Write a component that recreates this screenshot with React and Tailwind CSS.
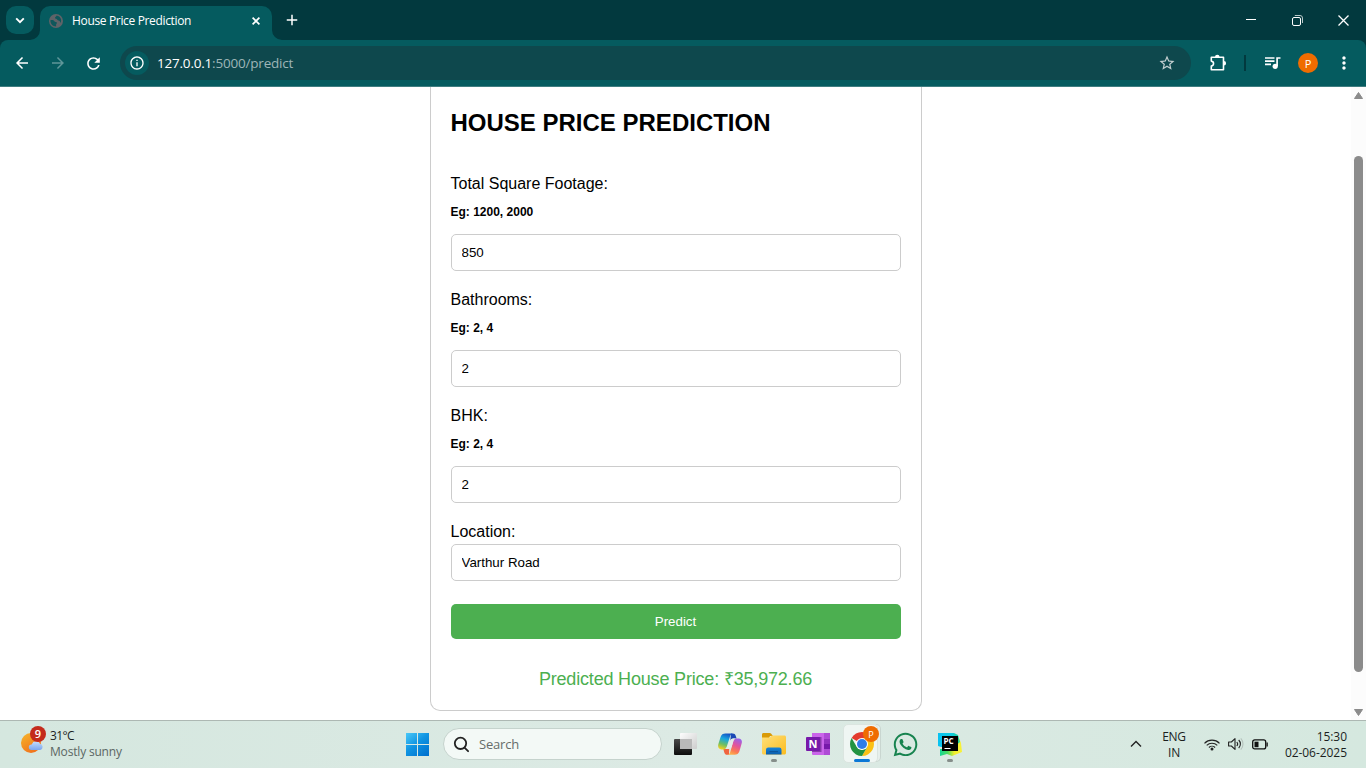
import React from "react";
import {
  MdArrowBack, MdArrowForward, MdRefresh, MdInfoOutline, MdStarBorder,
  MdMoreVert, MdAdd,
} from "react-icons/md";
import { FaWhatsapp } from "react-icons/fa";

const UI = "font-['Open_Sans','Noto_Sans',sans-serif]";

function GlobeIcon() {
  return (
    <svg width="14" height="14" viewBox="0 0 14 14">
      <circle cx="7" cy="7" r="7" fill="#5f6368" />
      <path d="M1.4 6.300c1.800-.5 3.400-.1 4 .9.500.9 2 .6 2.500 1.400.5.900-.7 1.300-.8 2.100v1.900C3.800 12.400 1.300 9.800 1.400 6.300Z" fill="#0f575b" />
      <path d="M7.600 1.500C7.400 2.800 6 2.700 6 3.800c0 1.200 1.800.8 2.300 1.900.4 1 1.900.7 2.500 1.500.4.500.3 1.200.5 1.700C13.400 6.400 11.600 2.200 7.600 1.500Z" fill="#0f575b" />
    </svg>
  );
}

function TabStrip() {
  return (
    <div className="flex h-10 items-start bg-[#02393e] pl-1.5 pt-1.5">
      <button className="flex size-7 items-center justify-center rounded-[10px] bg-[#055b5f] text-white">
        <svg width="10" height="7" fill="none" stroke="white" strokeWidth="1.900"><path d="m1.200 1.300 3.800 3.800 3.800-3.800" /></svg>
      </button>
      <div className="relative ml-1.5 flex h-[34px] w-[232px] items-center rounded-t-[10px] bg-[#055b5f] pb-[5px] pl-[9px] pr-2">
        <svg className="absolute -left-2.5 bottom-0" width="10" height="10"><path d="M10 0v10H0A10 10 0 0 0 10 0Z" fill="#055b5f" /></svg>
        <svg className="absolute -right-2.5 bottom-0" width="10" height="10"><path d="M0 0v10h10A10 10 0 0 1 0 0Z" fill="#055b5f" /></svg>
        <GlobeIcon />
        <span className="ml-[9px] flex-1 whitespace-nowrap text-[12px] leading-4 tracking-[-0.34px] text-white">House Price Prediction</span>
        <svg width="8" height="8" className="mr-1" stroke="white" strokeWidth="1.700"><path d="m.6.600 6.800 6.800M7.400.6.600 7.400" /></svg>
      </div>
      <MdAdd size={18} className="ml-[11px] mt-[5px] text-white" />
      <div className="ml-auto flex h-7 items-center text-white">
        <span className="flex w-[46px] justify-center"><svg width="10" height="10"><path d="M0 4.500h10" stroke="white" /></svg></span>
        <span className="flex w-[46px] justify-center">
          <svg width="11" height="11" fill="none" stroke="white"><rect x=".5" y="2.500" width="8" height="8" rx="1.500" /><path d="M2.800.5H8A2.500 2.500 0 0 1 10.500 3v5" stroke="#b9c9ca" /></svg>
        </span>
        <span className="flex w-[46px] justify-center"><svg width="11" height="11"><path d="M.5.5l10 10M10.500.5l-10 10" stroke="white" strokeWidth="1.300" /></svg></span>
      </div>
    </div>
  );
}

function Toolbar() {
  return (
    <div className="bg-[#02393e]">
      <div className="flex h-[47px] items-center rounded-t-[8px] border-b border-[#3f7d80] bg-[#055b5f] pl-[13px] pr-[12px] text-white">
        <MdArrowBack size={18} />
        <MdArrowForward size={18} className="ml-[18px] text-[#5f9699]" />
        <MdRefresh size={19} className="ml-[17px]" />
        <div className="ml-[17px] flex h-[34px] w-[1072px] items-center rounded-full bg-[#0e484d] pl-[5px] pr-[15px]">
          <span className="flex size-6 items-center justify-center rounded-full bg-[#055b5f]"><MdInfoOutline size={16} /></span>
          <span className="ml-2 flex-1 text-[13.5px] leading-5 tracking-[-0.2px] text-[#9db5b7]">
            <span className="text-white">127.0.0.1</span>:5000/predict
          </span>
          <MdStarBorder size={18} className="text-[#c3cfd0]" />
        </div>
        <svg className="ml-[18px]" width="18" height="18" viewBox="0 0 18 18" fill="none" stroke="white" strokeWidth="1.600" strokeLinejoin="round">
          <path d="M2.300 3.300h12.200v12.400H2.300v-3.600c3-.5 3-4.500 0-5Z" />
          <path d="M6 3a2.300 2.300 0 0 1 4.600 0ZM14.800 7a2.300 2.300 0 0 1 0 4.600Z" fill="white" stroke="none" />
        </svg>
        <span className="ml-[17px] h-4 w-0.5 bg-[#02393e]" />
        <svg className="ml-[18px]" width="18" height="18" viewBox="0 0 18 18" stroke="white" strokeWidth="1.700" fill="none">
          <path d="M1 4h9.500M1 7.200h9.500M1 10.400h6M13.100 12V4h3.400" />
          <circle cx="11.200" cy="12.300" r="2.600" fill="white" stroke="none" />
        </svg>
        <span className="ml-[16px] flex size-5 items-center justify-center rounded-full bg-[#ef6c00] text-[11px] leading-none">P</span>
        <MdMoreVert size={20} className="ml-[16px]" />
      </div>
    </div>
  );
}

function Field({ label, hint, value }) {
  return (
    <div className="mb-5 h-24">
      <label className="block text-[16px] leading-[18px]">{label}</label>
      <h5 className="mb-[15px] mt-[12px] text-[12px] font-bold leading-[14px]">{hint}</h5>
      <input className="block h-[37px] w-full rounded-[5px] border border-[#ccc] px-2.5 text-[13.333px] outline-none" defaultValue={value} />
    </div>
  );
}

function PredictionForm() {
  return (
    <form className="flex h-[624px] w-[492px] flex-col rounded-b-[10px] border border-t-0 border-[#ccc] px-5 pt-[22px]">
      <h2 className="mb-[39px] whitespace-nowrap text-[24px] font-bold leading-[27px]">HOUSE PRICE PREDICTION</h2>
      <Field label="Total Square Footage:" hint="Eg: 1200, 2000" value="850" />
      <Field label="Bathrooms:" hint="Eg: 2, 4" value="2" />
      <Field label="BHK:" hint="Eg: 2, 4" value="2" />
      <label className="mb-[3px] block text-[16px] leading-[18px]">Location:</label>
      <select className="block h-[37px] w-full shrink-0 appearance-none rounded-[5px] border border-[#ccc] bg-white px-2.5 text-[13.333px]">
        <option>Varthur Road</option>
      </select>
      <button type="button" className="mt-[23px] h-[35px] w-full shrink-0 rounded-[5px] bg-[#4caf50] text-[13.333px] text-white">Predict</button>
      <p className="mt-[30px] text-center text-[18px] leading-[21px] tracking-[-0.18px] text-[#4caf50]">Predicted House Price: ₹35,972.66</p>
    </form>
  );
}

function Scrollbar() {
  return (
    <div className="flex w-[15px] flex-col items-center bg-[#fcfcfc]">
      <svg className="mt-[5px]" width="9" height="7"><path d="M4.500 0.500L8.500 6.500h-8Z" fill="#8b8b8b" stroke="#8b8b8b" strokeLinejoin="round" /></svg>
      <div className="mt-[57px] h-[516px] w-[9px] rounded-full bg-[#8b8b8b]" />
      <svg className="mt-[37px]" width="9" height="7"><path d="M4.500 6.500L8.500 .5h-8Z" fill="#8b8b8b" stroke="#8b8b8b" strokeLinejoin="round" /></svg>
    </div>
  );
}

function WeatherIcon() {
  return (
    <svg width="26" height="29" viewBox="0 0 26 29">
      <defs>
        <linearGradient id="sun" x1="0" y1="0" x2=".6" y2="1"><stop stopColor="#f6b62c" /><stop offset="1" stopColor="#f0721c" /></linearGradient>
        <linearGradient id="cloud" x1="0" y1="0" x2="0" y2="1"><stop stopColor="#c4defc" /><stop offset="1" stopColor="#7ba6ee" /></linearGradient>
      </defs>
      <circle cx="11" cy="17" r="10" fill="url(#sun)" />
      <path d="M11.500 24a2.800 2.800 0 0 1 .2-5.600 4.600 4.600 0 0 1 8.400-.6 3.200 3.200 0 0 1 .2 6.200Z" fill="url(#cloud)" />
      <circle cx="18" cy="8" r="8" fill="#c42b1c" />
      <text x="18" y="12" textAnchor="middle" fontSize="11" fontWeight="600" fill="white">9</text>
    </svg>
  );
}

function StartIcon() {
  return (
    <svg width="24" height="24" viewBox="0 0 24 24">
      <defs><linearGradient id="win" gradientUnits="userSpaceOnUse" x1="0" y1="0" x2="20" y2="24"><stop stopColor="#4dcbf9" /><stop offset=".5" stopColor="#1094e2" /><stop offset="1" stopColor="#0072cf" /></linearGradient></defs>
      <path d="M0 1h11v11H0ZM12 1h11v11H12ZM0 13h11v11H0ZM12 13h11v11H12Z" fill="url(#win)" />
    </svg>
  );
}

function TaskViewIcon() {
  return (
    <svg width="24" height="24" viewBox="0 0 24 24">
      <defs>
        <linearGradient id="tvd" x1="0" y1="0" x2="0" y2="1"><stop stopColor="#4a4a4a" /><stop offset="1" stopColor="#0c0c0c" /></linearGradient>
        <linearGradient id="tvl" x1="0" y1="0" x2="1" y2="1"><stop stopColor="#fdfdfd" /><stop offset="1" stopColor="#cdcdcd" /></linearGradient>
      </defs>
      <rect x="0" y="7" width="18" height="16" rx="1" fill="url(#tvd)" />
      <rect x="6" y="1" width="17" height="16" rx="1" fill="url(#tvl)" />
      <path d="M6 7h12v10H6Z" fill="#b9b9b9" />
    </svg>
  );
}

function CopilotIcon() {
  return (
    <svg width="24" height="24" viewBox="0 0 24 24">
      <defs>
        <linearGradient id="cpa" x1=".6" y1="0" x2=".3" y2="1"><stop stopColor="#1654c4" /><stop offset=".35" stopColor="#18a7e0" /><stop offset=".7" stopColor="#6fbf62" /><stop offset="1" stopColor="#f5cf1f" /></linearGradient>
        <linearGradient id="cpb" x1=".7" y1="0" x2=".3" y2="1"><stop stopColor="#9a62e8" /><stop offset=".4" stopColor="#e3539b" /><stop offset=".75" stopColor="#fb7a52" /><stop offset="1" stopColor="#fdb04b" /></linearGradient>
      </defs>
      <path d="M13 1.500h1.800c1.600 0 2.400.8 2.900 2.300l.9 2.800h-3.500c-1.600 0-2.300.9-2.800 2.500Z" fill="#1b48b5" />
      <path d="M11 22.700H9.200c-1.600 0-2.400-.8-2.900-2.300L5.300 17h2.900c1.700 0 2.600-.9 3.100-2.500Z" fill="#f0643f" />
      <path d="M7.500 1.500h7c-1.300.4-2 1.400-2.500 3l-3.200 10c-.6 2-1.500 2.900-3.300 2.900H3.400C.8 17.400-.4 15 .3 12.300L2.600 5c.8-2.400 2.300-3.500 4.900-3.500Z" fill="url(#cpa)" />
      <path d="M16.500 22.700H9.700c1.500-.4 2.100-1.300 2.600-3L15.300 9.500c.6-2 1.500-2.900 3.200-2.900h2.100c2.600 0 3.800 2 3.100 4.700l-2.300 7.900c-.8 2.400-2.300 3.500-4.900 3.500Z" fill="url(#cpb)" />
      <path d="M12.300 8.900c.5-1.500 1.300-2.300 2.900-2.300h2.600c-1.500.4-2.100 1.400-2.600 3l-1.500 5c-.5 1.600-1.300 2.400-2.900 2.400H7.200c1-.4 1.500-1.300 1.900-2.500Z" fill="#e3ece8" />
    </svg>
  );
}

function FolderIcon() {
  return (
    <svg width="24" height="24" viewBox="0 0 24 24">
      <defs>
        <linearGradient id="fol" x1="0" y1="0" x2="1" y2="1"><stop stopColor="#ffe07c" /><stop offset="1" stopColor="#fbbc1e" /></linearGradient>
        <linearGradient id="fob" x1="0" y1="0" x2="0" y2="1"><stop stopColor="#1684d8" /><stop offset="1" stopColor="#0b5eae" /></linearGradient>
      </defs>
      <path d="M0 2.500C0 1.700.6 1 1.500 1h6.300c.5 0 .9.200 1.200.5L11 4H8L7 6H0Z" fill="#d99a08" />
      <path d="M0 5.500h7.500L10 3.500h12.500c.8 0 1.500.7 1.500 1.500v16c0 .8-.7 1.500-1.500 1.500h-21C.7 22.500 0 21.800 0 21Z" fill="url(#fol)" />
      <path d="M4 22.500v-4.800A2.200 2.200 0 0 1 6.200 15.500h11.100a2.200 2.200 0 0 1 2.200 2.200v4.800Z" fill="url(#fob)" />
      <path d="M7.500 19.700h8.500" stroke="#0c4f93" strokeWidth="1" />
    </svg>
  );
}

function OneNoteIcon() {
  return (
    <svg width="24" height="24" viewBox="0 0 24 24">
      <path d="M6 1h18v22H7a1 1 0 0 1-1-1Z" fill="#ca64ea" />
      <path d="M18 1h6v6h-6Z" fill="#ae4bd5" /><path d="M18 7h6v5h-6Z" fill="#9332bf" /><path d="M18 12h6v5h-6Z" fill="#7719aa" /><path d="M18 17h6v6h-6Z" fill="#ae4bd5" />
      <path d="M6 5h9.500v15H6Z" fill="#8a3bab" />
      <rect x="0" y="5" width="14" height="14" rx="1" fill="#7719aa" />
      <text x="7" y="16" textAnchor="middle" fontSize="11" fontWeight="700" fill="white">N</text>
    </svg>
  );
}

function ChromeIcon() {
  return (
    <svg width="24" height="24" viewBox="0 0 24 24">
      <path d="M12 12 1.610 6A12 12 0 0 1 22.390 6Z" fill="#e33b2e" />
      <path d="M12 6h10.390A12 12 0 0 1 12 24l5.200-9Z" fill="#fbc116" />
      <path d="M1.610 6 6.800 15 12 18l5.200-3L12 24A12 12 0 0 1 1.610 6Z" fill="#229342" />
      <circle cx="12" cy="12" r="6" fill="white" />
      <circle cx="12" cy="12" r="5" fill="#2f7de9" />
    </svg>
  );
}

function PyCharmIcon() {
  return (
    <svg width="24" height="24" viewBox="0 0 24 24">
      <defs>
        <linearGradient id="pyg" x1="0" y1="0" x2="1" y2="0"><stop stopColor="#14d795" /><stop offset=".35" stopColor="#4bdd5e" /><stop offset=".65" stopColor="#f2ee2e" /><stop offset="1" stopColor="#f7f13a" /></linearGradient>
        <linearGradient id="pyt" x1="0" y1="0" x2="1" y2="0"><stop stopColor="#08c2f2" /><stop offset=".6" stopColor="#0fcbe0" /><stop offset="1" stopColor="#22d88b" /></linearGradient>
      </defs>
      <path d="M2 17h2l17-11 2 5 1 9-5 2-5 2-5-2-7 2Z" fill="url(#pyg)" />
      <path d="M0 1h16l4 2 2 7-6 5H3l-3-1Z" fill="url(#pyt)" />
      <rect x="4" y="4" width="16" height="15" fill="#000" />
      <text x="5.500" y="12" fontSize="8" fontWeight="700" fill="white">PC</text>
      <path d="M6.500 16.500h6" stroke="white" strokeWidth="1" />
    </svg>
  );
}

function AppSlot({ children, indicator, active }) {
  return (
    <div className="relative flex h-[38px] w-11 items-center justify-center">
      {active && <span className="absolute -top-px left-[36px] h-[38px] w-[5px] rounded-r-[5px] border border-l-0 border-[#c9d6d0] bg-[#e6efeb]" />}
      {active && <span className="absolute -top-px left-[3px] h-[39px] w-[35px] rounded-[5px] border border-[#dbe5e0] bg-[#eff6f3]" />}
      <span className="relative">{children}</span>
      {indicator && <span className={indicator} />}
    </div>
  );
}

const RUNNING = "absolute bottom-px left-[19px] h-[3px] w-1.5 rounded-full bg-[#868e8a]";
const FOCUSED = "absolute bottom-px left-[14px] h-[3px] w-4 rounded-full bg-[#0b78d6]";

function Taskbar() {
  return (
    <div className="flex h-12 items-start border-t border-[#adb8b3] bg-linear-to-r from-[#d5e7df] via-[#dceae4] to-[#d5e8df] pt-1">
      <div className="flex w-[406px] items-start pl-5 pt-px">
        <WeatherIcon />
        <div className="ml-1 pt-[2px] text-[12px] leading-4">
          <div className="tracking-[-0.6px] text-[#1b1f1e]">31°C</div>
          <div className="tracking-[-0.18px] text-[#5b6663]">Mostly sunny</div>
        </div>
      </div>
      <div className="flex h-[38px] items-center">
        <StartIcon />
        <div className="ml-[13px] flex h-8 w-[219px] items-center rounded-full border border-[#c5d3cd] bg-[#f3f9f6] pl-[9px]">
          <svg width="17" height="17" viewBox="0 0 17 17" fill="none" stroke="#222" strokeWidth="1.800"><circle cx="7.500" cy="7.300" r="5.700" /><path d="m11.500 11.600 3.600 3.600" strokeLinecap="round" /></svg>
          <span className="ml-[9px] text-[13px] leading-5 tracking-[-0.2px] text-[#666d6a]">Search</span>
        </div>
        <div className="ml-[2px] flex">
          <AppSlot><TaskViewIcon /></AppSlot>
          <AppSlot><CopilotIcon /></AppSlot>
          <AppSlot indicator={RUNNING}><FolderIcon /></AppSlot>
          <AppSlot><OneNoteIcon /></AppSlot>
          <AppSlot active indicator={FOCUSED}>
            <ChromeIcon />
            <span className="absolute -top-[6px] left-[13px] flex size-4 items-center justify-center rounded-full bg-[#ef6c00] text-[9px] leading-none text-white">P</span>
          </AppSlot>
          <AppSlot><FaWhatsapp size={27} className="relative -left-px text-[#17834f]" /></AppSlot>
          <AppSlot indicator={RUNNING}><PyCharmIcon /></AppSlot>
        </div>
      </div>
      <div className="ml-auto flex h-[38px] items-center pr-[19px] text-[12px] leading-4 text-[#1b1f1e]">
        <svg width="12" height="8" fill="none" stroke="#222" strokeWidth="1.400"><path d="m1 6.500 5-5 5 5" /></svg>
        <div className="ml-[20px] w-6 pt-px text-center tracking-[-0.3px]">ENG<br />IN</div>
        <svg className="ml-[18px]" width="16" height="13" viewBox="0 0 16 13" fill="none" stroke="#222" strokeWidth="1.100">
          <path d="M.5 5.300a10.500 10.500 0 0 1 15 0M2.700 7.400a7.500 7.500 0 0 1 10.600 0M4.900 9.500a4.400 4.400 0 0 1 6.200 0" />
          <circle cx="8" cy="11" r="1.500" fill="#222" stroke="none" />
        </svg>
        <svg className="ml-2" width="16" height="14" viewBox="0 0 16 14" fill="none" stroke="#222" strokeWidth="1.100" strokeLinejoin="round">
          <path d="M.600 5h2.800l3.600-3.400v10.800L3.400 9H.6Z" /><path d="M8.800 5a3 3 0 0 1 0 4M10.700 3a5.600 5.600 0 0 1 0 8" /><path d="M12.800 1.300a8.500 8.500 0 0 1 0 11.400" stroke="#b5c2bc" />
        </svg>
        <svg className="ml-2" width="17" height="11" viewBox="0 0 17 11"><rect x=".7" y=".9" width="13" height="9" rx="2" fill="none" stroke="#111" strokeWidth="1.300" /><rect x="2.500" y="2.700" width="4" height="5.500" fill="#111" /><path d="M14.500 3.500h1.300v4h-1.300Z" fill="#111" /></svg>
        <div className="ml-[15px] w-[63px] whitespace-nowrap pt-px text-right tracking-[-0.05px]">15:30<br />02-06-2025</div>
      </div>
    </div>
  );
}

export default function App() {
  return (
    <div className={"flex h-[768px] w-[1366px] flex-col overflow-hidden bg-white " + UI}>
      <TabStrip />
      <Toolbar />
      <main className="flex h-[633px] font-['Liberation_Sans',Arial,sans-serif] text-black">
        <div className="flex flex-1 justify-center"><PredictionForm /></div>
        <Scrollbar />
      </main>
      <Taskbar />
    </div>
  );
}
